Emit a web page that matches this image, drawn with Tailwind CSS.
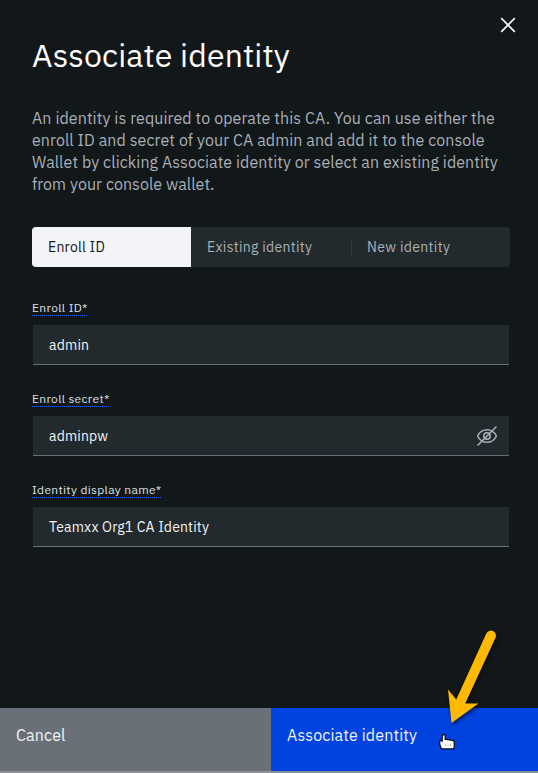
<!DOCTYPE html>
<html lang="en">
<head>
<meta charset="utf-8">
<title>Associate identity</title>
<script src="https://cdn.jsdelivr.net/npm/@tailwindcss/browser@4"></script>
</head>
<body class="bg-[#121719] font-['IBM_Plex_Sans',Roboto,sans-serif] text-[#f2f4f8]">
<main class="relative flex h-[773px] w-[538px] flex-col overflow-hidden bg-[#121719]">
  <button aria-label="Close" class="absolute top-[17px] right-[22px] size-4">
    <svg viewBox="0 0 16 16" class="size-4" fill="none" stroke="#f2f4f8" stroke-width="1.7"><path d="M1.2 1.2 14.8 14.8M14.8 1.2 1.2 14.8"/></svg>
  </button>
  <header class="px-8 pt-[35px]">
    <h1 class="text-[32px] leading-10 font-normal whitespace-nowrap text-white tracking-[0.13px]">Associate identity</h1>
    <p class="mt-8 text-base leading-[22px] whitespace-nowrap text-[#a8b0b7]">
      <span class="block tracking-[0.09px]">An identity is required to operate this CA. You can use either the</span>
      <span class="block tracking-[0.08px]">enroll ID and secret of your CA admin and add it to the console</span>
      <span class="block tracking-[0.07px]">Wallet by clicking Associate identity or select an existing identity</span>
      <span class="block tracking-[0.06px]">from your console wallet.</span>
    </p>
  </header>
  <nav class="mt-8 mr-7 ml-8 flex h-10 items-center overflow-hidden rounded bg-[#232a2d] text-sm text-[#a8b0b7]">
    <button class="h-10 w-[159px] bg-[#f2f4f8] pl-4 text-left text-[#121619] tracking-[0.25px]">Enroll ID</button>
    <button class="h-10 w-40 pl-4 text-left tracking-[0.3px]">Existing identity</button>
    <span class="h-4 w-px bg-[#343a3f]"></span>
    <button class="h-10 pl-[15px] text-left tracking-[0.34px]">New identity</button>
  </nav>
  <form class="flex flex-col gap-[26px] pt-[33px] pr-[29px] pl-[33px]">
    <div>
      <label class="-ml-px block h-4 w-[55px] border-b border-dotted border-[#0f62fe] text-xs leading-4 whitespace-nowrap tracking-[0.35px] text-[#dde1e6]">Enroll ID*</label>
      <div class="mt-[9px] flex h-10 items-center border-b border-[#697077] bg-[#232a2d] px-4 text-sm tracking-[0.2px]">admin</div>
    </div>
    <div>
      <label class="-ml-px block h-4 w-[77px] border-b border-dotted border-[#0f62fe] text-xs leading-4 whitespace-nowrap tracking-[0.32px] text-[#dde1e6]">Enroll secret*</label>
      <div class="mt-[9px] flex h-10 items-center justify-between border-b border-[#697077] bg-[#232a2d] pr-3 pl-4 text-sm tracking-[0.16px]">adminpw
        <svg viewBox="0 0 20 20" class="size-5" fill="none" stroke="#a8b0b7" stroke-width="1.5"><path d="M.6 10C2.5 6 6 3.7 10 3.7s7.500 2.300 9.400 6.300c-1.900 4-5.400 6.300-9.400 6.300S2.500 14 .6 10ZM.5 19.500 19.500.5"/><circle cx="10" cy="10" r="3.200"/></svg>
      </div>
    </div>
    <div>
      <label class="-ml-px block h-4 w-[129px] border-b border-dotted border-[#0f62fe] text-xs leading-4 whitespace-nowrap tracking-[0.34px] text-[#dde1e6]">Identity display name*</label>
      <div class="mt-[9px] flex h-10 items-center border-b border-[#697077] bg-[#232a2d] px-4 text-sm tracking-[0.16px]">Teamxx Org1 CA Identity</div>
    </div>
  </form>
  <footer class="mt-auto flex h-[65px] border-b-2 border-[#8d9196] text-base">
    <button class="w-[271px] bg-[#697077] pb-[9px] pl-4 text-left tracking-[0.16px]">Cancel</button>
    <button class="flex-1 bg-[#0043e0] pb-[9px] pl-4 text-left tracking-[0.13px]">Associate identity</button>
  </footer>
  <svg class="absolute top-[620px] left-[430px] drop-shadow-[1px_2px_2px_rgba(0,0,0,0.6)]" width="80" height="110" viewBox="430 620 80 110" fill="#ffb900"><path d="M486.300 633.500A5 5 0 0 1 495.500 637.800L465.200 703.500 478.500 703.500 451.500 723 448 689.500 456.300 699.500Z"/></svg>
  <svg class="absolute top-[732px] left-[438px]" width="20" height="20" viewBox="438 732 20 20" fill="#fff" stroke="#111" stroke-width="1.300" stroke-linejoin="round"><path d="M442.200 736.200q0-1.700 1.500-1.700t1.500 1.700v3.300q1.500-.6 2.700.3 1.500-.4 2.700.4 3.700-.4 3.700 2.600v3.200l-.5 2.800h-12.500l-1.600-4.500v-2.600q0-1.200 1.300-1.200l1.200.8Z"/><path d="M445.500 744v2.500M448 744v2.500M450.500 744v2.500" stroke="#999" stroke-width=".6"/></svg>
</main>
</body>
</html>
